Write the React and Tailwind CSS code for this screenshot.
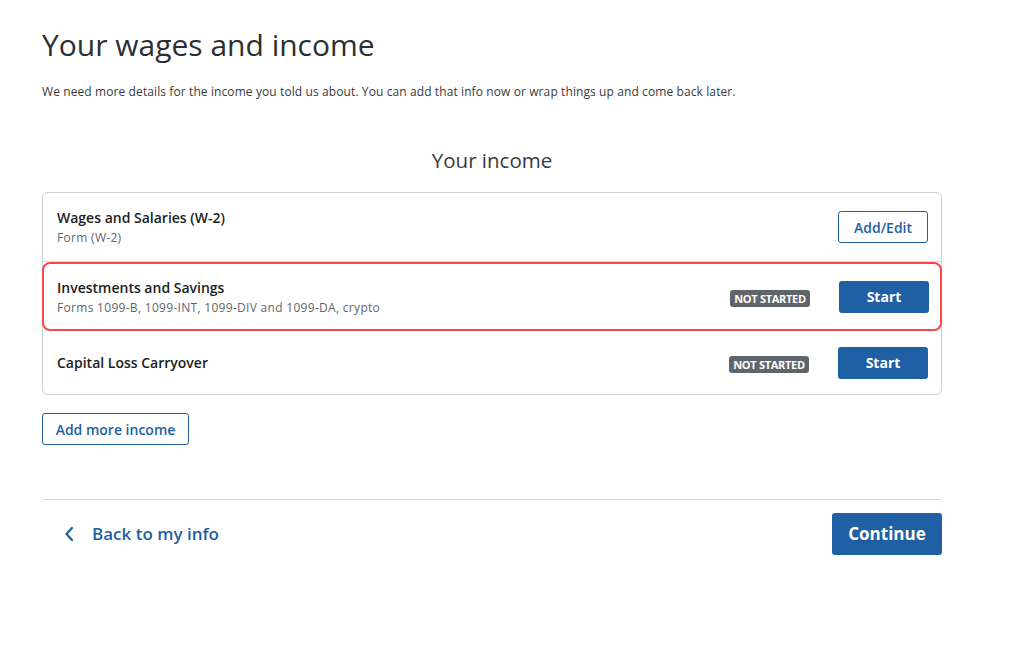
import React from "react";

function Badge() {
  return (
    <span className="inline-flex h-[17px] w-[80px] items-center justify-center rounded-[3px] bg-[#5f666b] text-[11px] font-bold uppercase tracking-[-0.3px] text-white">
      Not started
    </span>
  );
}

function IncomeRow({ title, subtitle, status, action, highlighted, last }) {
  const primary = action === "Start";
  return (
    <div
      className={
        highlighted
          ? "-mx-px flex h-[69px] items-center rounded-[8px] border-2 border-[#ff4545] pl-[13px] pr-[11px]"
          : `flex items-center pl-[14px] pr-[13px] ${last ? "h-[63px]" : "h-[69px] border-b border-[#d6dbe0]"}`
      }
    >
      <div className="flex-1">
        <div className="text-[14px] font-semibold leading-[20px] text-[#1b1e21]">{title}</div>
        {subtitle && (
          <div className="mt-[1px] text-[12px] leading-[17px] tracking-[0.3px] text-[#5f666b]">{subtitle}</div>
        )}
      </div>
      {status && (
        <div className="mr-[29px]">
          <Badge />
        </div>
      )}
      <button
        className={
          primary
            ? "h-[32px] w-[90px] rounded-[3px] bg-[#1f5fa3] text-[14px] font-bold text-white"
            : "h-[32px] w-[90px] rounded-[3px] border border-[#1f5fa3] bg-white text-[14px] font-semibold text-[#1f5fa3]"
        }
      >
        {action}
      </button>
    </div>
  );
}

export default function App() {
  return (
    <div className="min-h-[665px] w-full bg-white" style={{ fontFamily: "'Open Sans', 'Noto Sans', sans-serif" }}>
      <div className="ml-[42px] w-[900px] pt-[25px]">
        <h1 className="text-[30px] font-normal leading-[40px] text-[#2b2f33]">Your wages and income</h1>
        <p className="mt-[19px] text-[12px] leading-[16px] tracking-[0.1px] text-[#393a3d]">
          We need more details for the income you told us about. You can add that info now or wrap things up and come back later.
        </p>

        <h2 className="mt-[46px] text-center text-[20.5px] font-normal leading-[28px] text-[#393a3d]">Your income</h2>

        <div className="mt-[18px] rounded-[6px] border border-[#c9d0d6]">
          <IncomeRow title="Wages and Salaries (W-2)" subtitle="Form (W-2)" action="Add/Edit" />
          <IncomeRow
            title="Investments and Savings"
            subtitle="Forms 1099-B, 1099-INT, 1099-DIV and 1099-DA, crypto"
            status
            action="Start"
            highlighted
          />
          <IncomeRow title="Capital Loss Carryover" status action="Start" last />
        </div>

        <button className="mt-[18px] h-[32px] w-[147px] rounded-[3px] border border-[#1f5fa3] text-[14px] font-semibold text-[#1f5fa3]">
          Add more income
        </button>

        <div className="mt-[54px] border-t border-[#d6dbe0]" />

        <div className="mt-[13px] flex items-center justify-between">
          <button className="flex items-center pl-[22px] text-[17px] font-semibold text-[#1f5fa3]">
            <svg width="10" height="16" viewBox="0 0 10 16" fill="none" className="mr-[18px]">
              <path d="M8 2 L2.5 8 L8 14" stroke="#1f5fa3" strokeWidth="2.2" strokeLinecap="round" strokeLinejoin="round" />
            </svg>
            Back to my info
          </button>
          <button className="h-[42px] w-[110px] rounded-[3px] bg-[#1f5fa3] text-[17px] font-bold text-white">Continue</button>
        </div>
      </div>
    </div>
  );
}
